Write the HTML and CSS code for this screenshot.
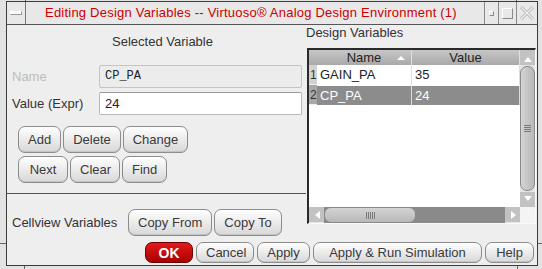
FILE: index.html
```html
<!DOCTYPE html>
<html lang="en">
<head>
    <meta charset="UTF-8">
    <title>Editing Design Variables</title>
    <link rel="stylesheet" href="styles.css">
</head>
<body>
    <div class="frame">
        <div class="win">
            <div class="titlebar">
                <div class="tb-cell tb-menu"><span class="menu-bar"></span></div>
                <div class="tb-title">Editing Design Variables -- Virtuoso&reg; Analog Design Environment (1)</div>
                <div class="tb-cell tb-min"><span class="dot"></span></div>
                <div class="tb-cell tb-max"><span class="box"></span></div>
                <div class="tb-cell tb-close">
                    <svg width="14" height="14" viewBox="0 0 14 14">
                        <path d="M1 1 L13 13 M13 1 L1 13" stroke="#b0b0b0" stroke-width="3" fill="none"/>
                        <path d="M1 1 L13 13 M13 1 L1 13" stroke="#f4f4f4" stroke-width="1.2" fill="none"/>
                    </svg>
                </div>
            </div>

            <div class="content">
                <div class="panes">
                    <div class="left">
                        <div class="selected">
                            <h2 class="pane-title centered">Selected Variable</h2>
                            <div class="field">
                                <label class="disabled">Name</label>
                                <div class="input readonly mono">CP_PA</div>
                            </div>
                            <div class="field">
                                <label>Value (Expr)</label>
                                <div class="input">24</div>
                            </div>
                            <div class="btn-rows">
                                <div class="btn-row">
                                    <button class="btn tall">Add</button>
                                    <button class="btn tall">Delete</button>
                                    <button class="btn tall">Change</button>
                                </div>
                                <div class="btn-row">
                                    <button class="btn tall w50">Next</button>
                                    <button class="btn tall w50">Clear</button>
                                    <button class="btn tall">Find</button>
                                </div>
                            </div>
                        </div>
                        <div class="cellview">
                            <span class="cv-label">Cellview Variables</span>
                            <button class="btn tall">Copy From</button>
                            <button class="btn tall">Copy To</button>
                        </div>
                    </div>

                    <div class="right">
                        <h2 class="pane-title">Design Variables</h2>
                        <div class="table">
                            <div class="cells">
                                <div class="th rowhead"></div>
                                <div class="th">Name <span class="sort"></span></div>
                                <div class="th">Value</div>

                                <div class="rownum">1</div>
                                <div class="td">GAIN_PA</div>
                                <div class="td">35</div>

                                <div class="rownum sel">2</div>
                                <div class="td sel">CP_PA</div>
                                <div class="td sel">24</div>
                            </div>
                            <div class="vscroll">
                                <div class="arrow up"></div>
                                <div class="vthumb"><span class="grip-h"></span></div>
                                <div class="arrow down"></div>
                            </div>
                            <div class="hscroll">
                                <div class="arrow left"></div>
                                <div class="htrough">
                                    <div class="hthumb"><span class="grip-v"></span></div>
                                </div>
                                <div class="arrow right"></div>
                            </div>
                            <div class="corner"></div>
                        </div>
                    </div>
                </div>

                <div class="actions">
                    <button class="btn ok">OK</button>
                    <button class="btn w58">Cancel</button>
                    <button class="btn w53">Apply</button>
                    <button class="btn wide">Apply &amp; Run Simulation</button>
                    <button class="btn w49">Help</button>
                </div>
            </div>
        </div>
    </div>
</body>
</html>
```

FILE: styles.css
```css
/* Window frame */
body {
    margin: 0;
    font-family: 'Liberation Sans', Arial, sans-serif;
    font-size: 13px;
    color: #333;
    background-color: #e2e2e2;
}

.frame {
    width: 542px;
    height: 269px;
    box-sizing: border-box;
    padding: 1px 4px 3px 6px;
    /* resize handle marks on the frame */
    background:
        linear-gradient(#666, #666) 25px 0 / 1px 1px no-repeat,
        linear-gradient(#666, #666) 516px 0 / 1px 1px no-repeat,
        linear-gradient(#666, #666) 24px 266px / 1px 3px no-repeat,
        linear-gradient(#666, #666) 517px 266px / 1px 3px no-repeat,
        linear-gradient(#666, #666) 0 243px / 6px 1px no-repeat,
        linear-gradient(#666, #666) 538px 243px / 4px 1px no-repeat,
        #e2e2e2;
}

.win {
    height: 100%;
    box-sizing: border-box;
    border: 1px solid #3c3c3c;
    background-color: #eeeeee;
    display: flex;
    flex-direction: column;
}

/* Title bar */
.titlebar {
    height: 22px;
    display: flex;
    background-color: #e8e8e8;
    border-bottom: 1px solid #555;
}

.tb-cell {
    display: flex;
    align-items: center;
    justify-content: center;
}

.tb-menu {
    width: 18px;
    border-right: 1px solid #777;
}

.menu-bar {
    width: 10px;
    height: 2px;
    background-color: #fafafa;
    border: 1px solid #9a9a9a;
    border-top-color: #fff;
    border-left-color: #fff;
}

.tb-title {
    flex: 1;
    padding-left: 19px;
    line-height: 22px;
    color: #cc0000;
    font-size: 13px;
    letter-spacing: 0.22px;
    white-space: nowrap;
}

.tb-min {
    width: 13px;
    border-left: 1px solid #888;
}

.tb-min .dot {
    width: 3px;
    height: 3px;
    border: 1px solid #888;
    border-top-color: #fff;
    border-left-color: #fff;
}

.tb-max {
    width: 17px;
    border-left: 1px solid #888;
}

.tb-max .box {
    width: 9px;
    height: 9px;
    border: 1px solid #888;
    border-top-color: #fff;
    border-left-color: #fff;
}

.tb-close {
    width: 20px;
    border-left: 1px solid #888;
}

/* Content */
.content {
    flex: 1;
    display: flex;
    flex-direction: column;
}

.panes {
    height: 213px;
    display: flex;
}

.left {
    width: 299px;
}

.selected {
    padding-top: 9px;
    box-sizing: border-box;
    height: 169px;
    border-bottom: 1px solid #555;
}

.pane-title {
    margin: 0;
    font-size: 13px;
    font-weight: normal;
    line-height: 16px;
    color: #333;
}

.pane-title.centered {
    text-align: center;
    padding-left: 12px;
}

.field {
    display: flex;
    align-items: center;
    margin-top: 4px;
    padding-left: 5px;
}

.pane-title + .field {
    margin-top: 15px;
}

.field label {
    width: 87px;
}

.field label.disabled {
    color: #bcbcbc;
}

.input {
    width: 203px;
    height: 23px;
    box-sizing: border-box;
    padding: 0 5px;
    line-height: 21px;
    background-color: #fff;
    border: 1px solid #b8b8b8;
    border-top-color: #9a9a9a;
    border-radius: 2px;
    color: #222;
}

.input.readonly {
    background-color: #ececec;
    border-color: #c4c4c4;
}

.mono {
    font-family: 'Liberation Mono', 'Courier New', monospace;
    font-size: 12px;
}

.btn-rows {
    margin-top: 11px;
    padding-left: 11px;
}

.btn-row {
    display: flex;
    gap: 2px;
    margin-bottom: 3px;
}

/* Buttons */
.btn {
    height: 21px;
    padding: 0 9px;
    font-family: 'Liberation Sans', Arial, sans-serif;
    font-size: 13px;
    color: #3a3a3a;
    background: linear-gradient(#fefefe, #d8d8d8);
    border: 1px solid #8c8c8c;
    border-radius: 7px;
    box-shadow: inset 0 -1px 0 #c4c4c4;
}

.btn.tall {
    height: 27px;
}

.btn.w50 {
    width: 50px;
}

.btn.w58 {
    width: 58px;
}

.btn.w53 {
    width: 53px;
}

.btn.w49 {
    width: 49px;
}

.btn.ok {
    width: 48px;
    color: #fff;
    font-weight: bold;
    font-size: 14px;
    background: linear-gradient(#e21a1a, #a80000);
    border-color: #6e0000;
    box-shadow: none;
}

.btn.wide {
    width: 169px;
}

.cellview {
    display: flex;
    align-items: center;
    gap: 2px;
    padding: 15px 0 0 5px;
}

.cv-label {
    width: 114px;
}

/* Design variables table */
.right {
    flex: 1;
}

.table {
    height: 176px;
    margin: 7px 1px 0 1px;
    box-sizing: border-box;
    border-top: 2px solid #2a2a2a;
    border-left: 2px solid #2a2a2a;
    border-right: 1px solid #fafafa;
    border-bottom: 1px solid #fafafa;
    display: grid;
    grid-template-columns: 1fr 15px;
    grid-template-rows: 1fr 16px;
}

.cells {
    background-color: #fff;
    display: grid;
    grid-template-columns: 8px 95px 1fr;
    grid-template-rows: 15px 20px 20px;
    align-content: start;
}

.th {
    background: linear-gradient(#c6c6c6, #a9a9a9);
    color: #222;
    text-align: center;
    line-height: 15px;
    border-right: 1px solid #e0e0e0;
    position: relative;
}

.th.rowhead {
    border-right: none;
}

.sort {
    position: absolute;
    right: 6px;
    top: 6px;
    width: 0;
    height: 0;
    border-left: 4px solid transparent;
    border-right: 4px solid transparent;
    border-bottom: 4px solid #fff;
}

.rownum {
    background-color: #d2d2d2;
    color: #333;
    font-size: 12px;
    line-height: 20px;
    padding-left: 1px;
    border-bottom: 1px solid #eee;
}

.rownum.sel {
    background-color: #a8a8a8;
}

.td {
    line-height: 20px;
    padding-left: 3px;
    color: #222;
    border-right: 1px solid #ddd;
}

.td.sel {
    background-color: #8c8c8c;
    color: #fff;
    border-top: 1px solid #fff;
    line-height: 19px;
}

.vscroll {
    display: flex;
    flex-direction: column;
    background-color: #e4e4e4;
}

.arrow {
    flex: none;
    width: 15px;
    height: 15px;
    background-color: #c2c2c2;
    position: relative;
}

.arrow::after {
    content: '';
    position: absolute;
    left: 4px;
    top: 5px;
    border: 4px solid transparent;
}

.arrow.up::after {
    top: 3px;
    border-bottom: 5px solid #fff;
}

.arrow.down::after {
    top: 4px;
    border-top: 5px solid #fff;
}

.arrow.left::after {
    left: 2px;
    top: 4px;
    border-right: 5px solid #fff;
}

.arrow.right::after {
    left: 6px;
    top: 4px;
    border-left: 5px solid #fff;
}

.vthumb {
    flex: 1;
    margin: 1px 0 1px 0;
    background: linear-gradient(90deg, #d4d4d4, #b8b8b8);
    border: 1px solid #8a8a8a;
    border-radius: 7px;
    display: flex;
    align-items: center;
    justify-content: center;
}

.grip-h {
    width: 7px;
    height: 7px;
    background: repeating-linear-gradient(#7a7a7a 0 1px, transparent 1px 2px);
}

.hscroll {
    display: flex;
    background-color: #e4e4e4;
}

.htrough {
    flex: 1;
    background-color: #8a8a8a;
}

.hthumb {
    width: 90px;
    height: 14px;
    background: linear-gradient(#d4d4d4, #b8b8b8);
    border: 1px solid #8a8a8a;
    border-radius: 7px;
    display: flex;
    align-items: center;
    justify-content: center;
}

.grip-v {
    width: 9px;
    height: 7px;
    background: repeating-linear-gradient(90deg, #7a7a7a 0 1px, transparent 1px 2px);
}

.corner {
    background-color: #f4f4f4;
}

/* Bottom buttons */
.actions {
    display: flex;
    justify-content: flex-end;
    gap: 3px;
    margin-top: 4px;
    padding-right: 3px;
}
```
